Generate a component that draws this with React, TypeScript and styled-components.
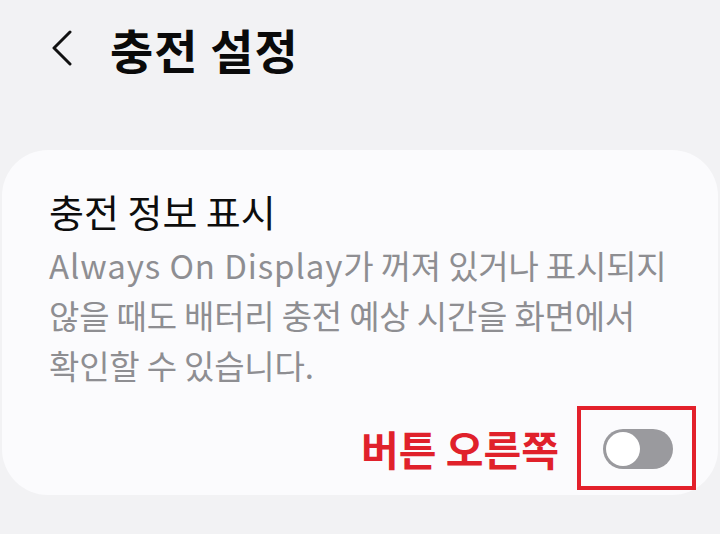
import React from 'react';
import styled, { createGlobalStyle } from 'styled-components';

const GlobalStyle = createGlobalStyle`
  html, body {
    margin: 0;
    padding: 0;
    background: #f2f2f4;
  }
  body {
    font-family: "Noto Sans CJK KR", "Noto Sans", sans-serif;
  }
`;

const Page = styled.div`
  width: 720px;
  height: 534px;
  background: #f2f2f4;
  overflow: hidden;
  display: flex;
  flex-direction: column;
`;

const Header = styled.header`
  height: 98px;
  display: flex;
  align-items: center;
  padding: 0 0 2px 48px;
  gap: 34px;
  box-sizing: border-box;
`;

const BackButton = styled.button`
  width: 28px;
  height: 40px;
  padding: 0;
  border: none;
  background: none;
  display: flex;
  align-items: center;
  justify-content: center;
`;

const Title = styled.h1`
  margin: 0;
  font-size: 47px;
  font-weight: 700;
  color: #0a0a0a;
  letter-spacing: 1px;
`;

const Card = styled.section`
  margin: 52px 2px 0 2px;
  height: 345px;
  box-sizing: border-box;
  background: #fbfbfd;
  border-radius: 46px;
  padding: 32px 46px 0 47px;
  display: flex;
  flex-direction: column;
`;

const ItemTitle = styled.h2`
  margin: 0;
  font-size: 38px;
  font-weight: 400;
  color: #0d0d0d;
  line-height: 58px;
`;

const Description = styled.p`
  margin: 0;
  font-size: 33px;
  line-height: 50px;
  color: #8e8e92;
  letter-spacing: -0.2px;
  white-space: nowrap;
`;

const Latin = styled.span`
  letter-spacing: 0.9px;
`;

const ToggleRow = styled.div`
  margin-top: 14px;
  display: flex;
  align-items: center;
  justify-content: flex-end;
  gap: 18px;
  margin-right: -24px;
`;

const Annotation = styled.span`
  font-size: 41px;
  font-weight: 700;
  color: #e0212b;
  margin-top: 2px;
`;

const Highlight = styled.div`
  width: 119px;
  height: 84px;
  box-sizing: border-box;
  border: 4px solid #e3202b;
  display: flex;
  align-items: center;
  justify-content: center;
  margin-top: 2px;
`;

const Track = styled.div<{ $on?: boolean }>`
  width: 70px;
  height: 40px;
  border-radius: 20px;
  background: ${({ $on }) => ($on ? '#3e91ff' : '#9a9a9e')};
  display: flex;
  align-items: center;
  padding: 0 3px;
  box-sizing: border-box;
  justify-content: ${({ $on }) => ($on ? 'flex-end' : 'flex-start')};
  margin-top: 2px;
  margin-left: 2px;
`;

const Knob = styled.div`
  width: 34px;
  height: 34px;
  border-radius: 50%;
  background: #ffffff;
`;

export default function App() {
  return (
    <Page>
      <GlobalStyle />
      <Header>
        <BackButton aria-label="back">
          <svg width="22" height="36" viewBox="0 0 22 36" fill="none">
            <path d="M19 2 L3 18 L19 34" stroke="#111" strokeWidth="3" strokeLinecap="round" strokeLinejoin="round" />
          </svg>
        </BackButton>
        <Title>충전 설정</Title>
      </Header>
      <Card>
        <ItemTitle>충전 정보 표시</ItemTitle>
        <Description>
          <Latin>Always On Display</Latin>가 꺼져 있거나 표시되지
          <br />
          않을 때도 배터리 충전 예상 시간을 화면에서
          <br />
          확인할 수 있습니다.
        </Description>
        <ToggleRow>
          <Annotation>버튼 오른쪽</Annotation>
          <Highlight>
            <Track>
              <Knob />
            </Track>
          </Highlight>
        </ToggleRow>
      </Card>
    </Page>
  );
}
